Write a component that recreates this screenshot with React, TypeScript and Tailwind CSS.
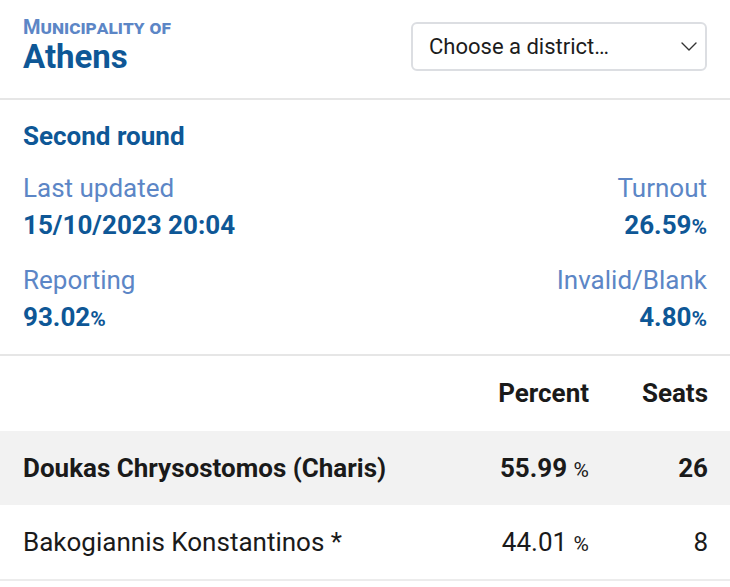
const dark = "text-[#0e5796]";
const light = "text-[#5c86c6]";

const Stat = ({
  label,
  value,
  pct,
  right,
}: {
  label: string;
  value: string;
  pct?: boolean;
  right?: boolean;
}) => (
  <div className={right ? "text-right" : ""}>
    <div className={`${light} text-[26px] leading-[30px]`}>{label}</div>
    <div className={`${dark} text-[26px] font-bold leading-[30px] mt-[7px]`}>
      {value}
      {pct && <span className="text-[21px]">%</span>}
    </div>
  </div>
);

const App = () => {
  const rows = [
    { name: "Doukas Chrysostomos (Charis)", pct: "55.99", seats: 26, win: true },
    { name: "Bakogiannis Konstantinos *", pct: "44.01", seats: 8, win: false },
  ];

  return (
    <div className="w-[730px] h-[587px] bg-white overflow-hidden font-['Roboto',sans-serif]">
      {/* header */}
      <div className="flex items-start justify-between px-[23px] h-[100px] border-b-2 border-[#e6e6e6]">
        <div className="pt-[17px]">
          <div className={`${light} font-bold text-[20px] leading-[20px] [font-variant-caps:small-caps]`}>
            Municipality of
          </div>
          <div className={`${dark} font-bold text-[33px] leading-[36px] mt-[2px]`}>Athens</div>
        </div>
        <div className="mt-[22px] w-[296px] h-[49px] rounded-[6px] border-2 border-[#dcdee2] flex items-center justify-between pl-[16px] pr-[8px]">
          <span className="text-[22px] text-[#1c1c1c]">Choose a district…</span>
          <svg width="16" height="9" viewBox="0 0 16 9" fill="none" className="text-[#333]">
            <path d="M1 1l7 7 7-7" stroke="currentColor" strokeWidth="1.4" strokeLinecap="round" strokeLinejoin="round" />
          </svg>
        </div>
      </div>

      {/* summary */}
      <div className="px-[23px] pt-[21px] h-[256px] border-b-2 border-[#e6e6e6]">
        <div className={`${dark} font-bold text-[26px] leading-[30px]`}>Second round</div>
        <div className="grid grid-cols-2 gap-y-[23px] mt-[22px]">
          <Stat label="Last updated" value="15/10/2023 20:04" />
          <Stat label="Turnout" value="26.59" pct right />
          <Stat label="Reporting" value="93.02" pct />
          <Stat label="Invalid/Blank" value="4.80" pct right />
        </div>
      </div>

      {/* results */}
      <div className="flex items-center h-[75px] px-[22px] text-[26px] font-bold text-[#1a1a1a]">
        <div className="flex-1" />
        <div className="w-[130px] text-right">Percent</div>
        <div className="w-[119px] text-right">Seats</div>
      </div>
      {rows.map((r) => (
        <div
          key={r.name}
          className={`flex items-center px-[22px] text-[26px] text-[#1a1a1a] ${
            r.win ? "h-[74px] bg-[#f2f2f2] font-bold" : "h-[76px] border-b-2 border-[#ececec]"
          }`}
        >
          <div className="flex-1 pl-[1px]">{r.name}</div>
          <div className="w-[130px] text-right">
            {r.pct} <span className="text-[21px] font-normal">%</span>
          </div>
          <div className="w-[119px] text-right">{r.seats}</div>
        </div>
      ))}
    </div>
  );
};

export default App;
